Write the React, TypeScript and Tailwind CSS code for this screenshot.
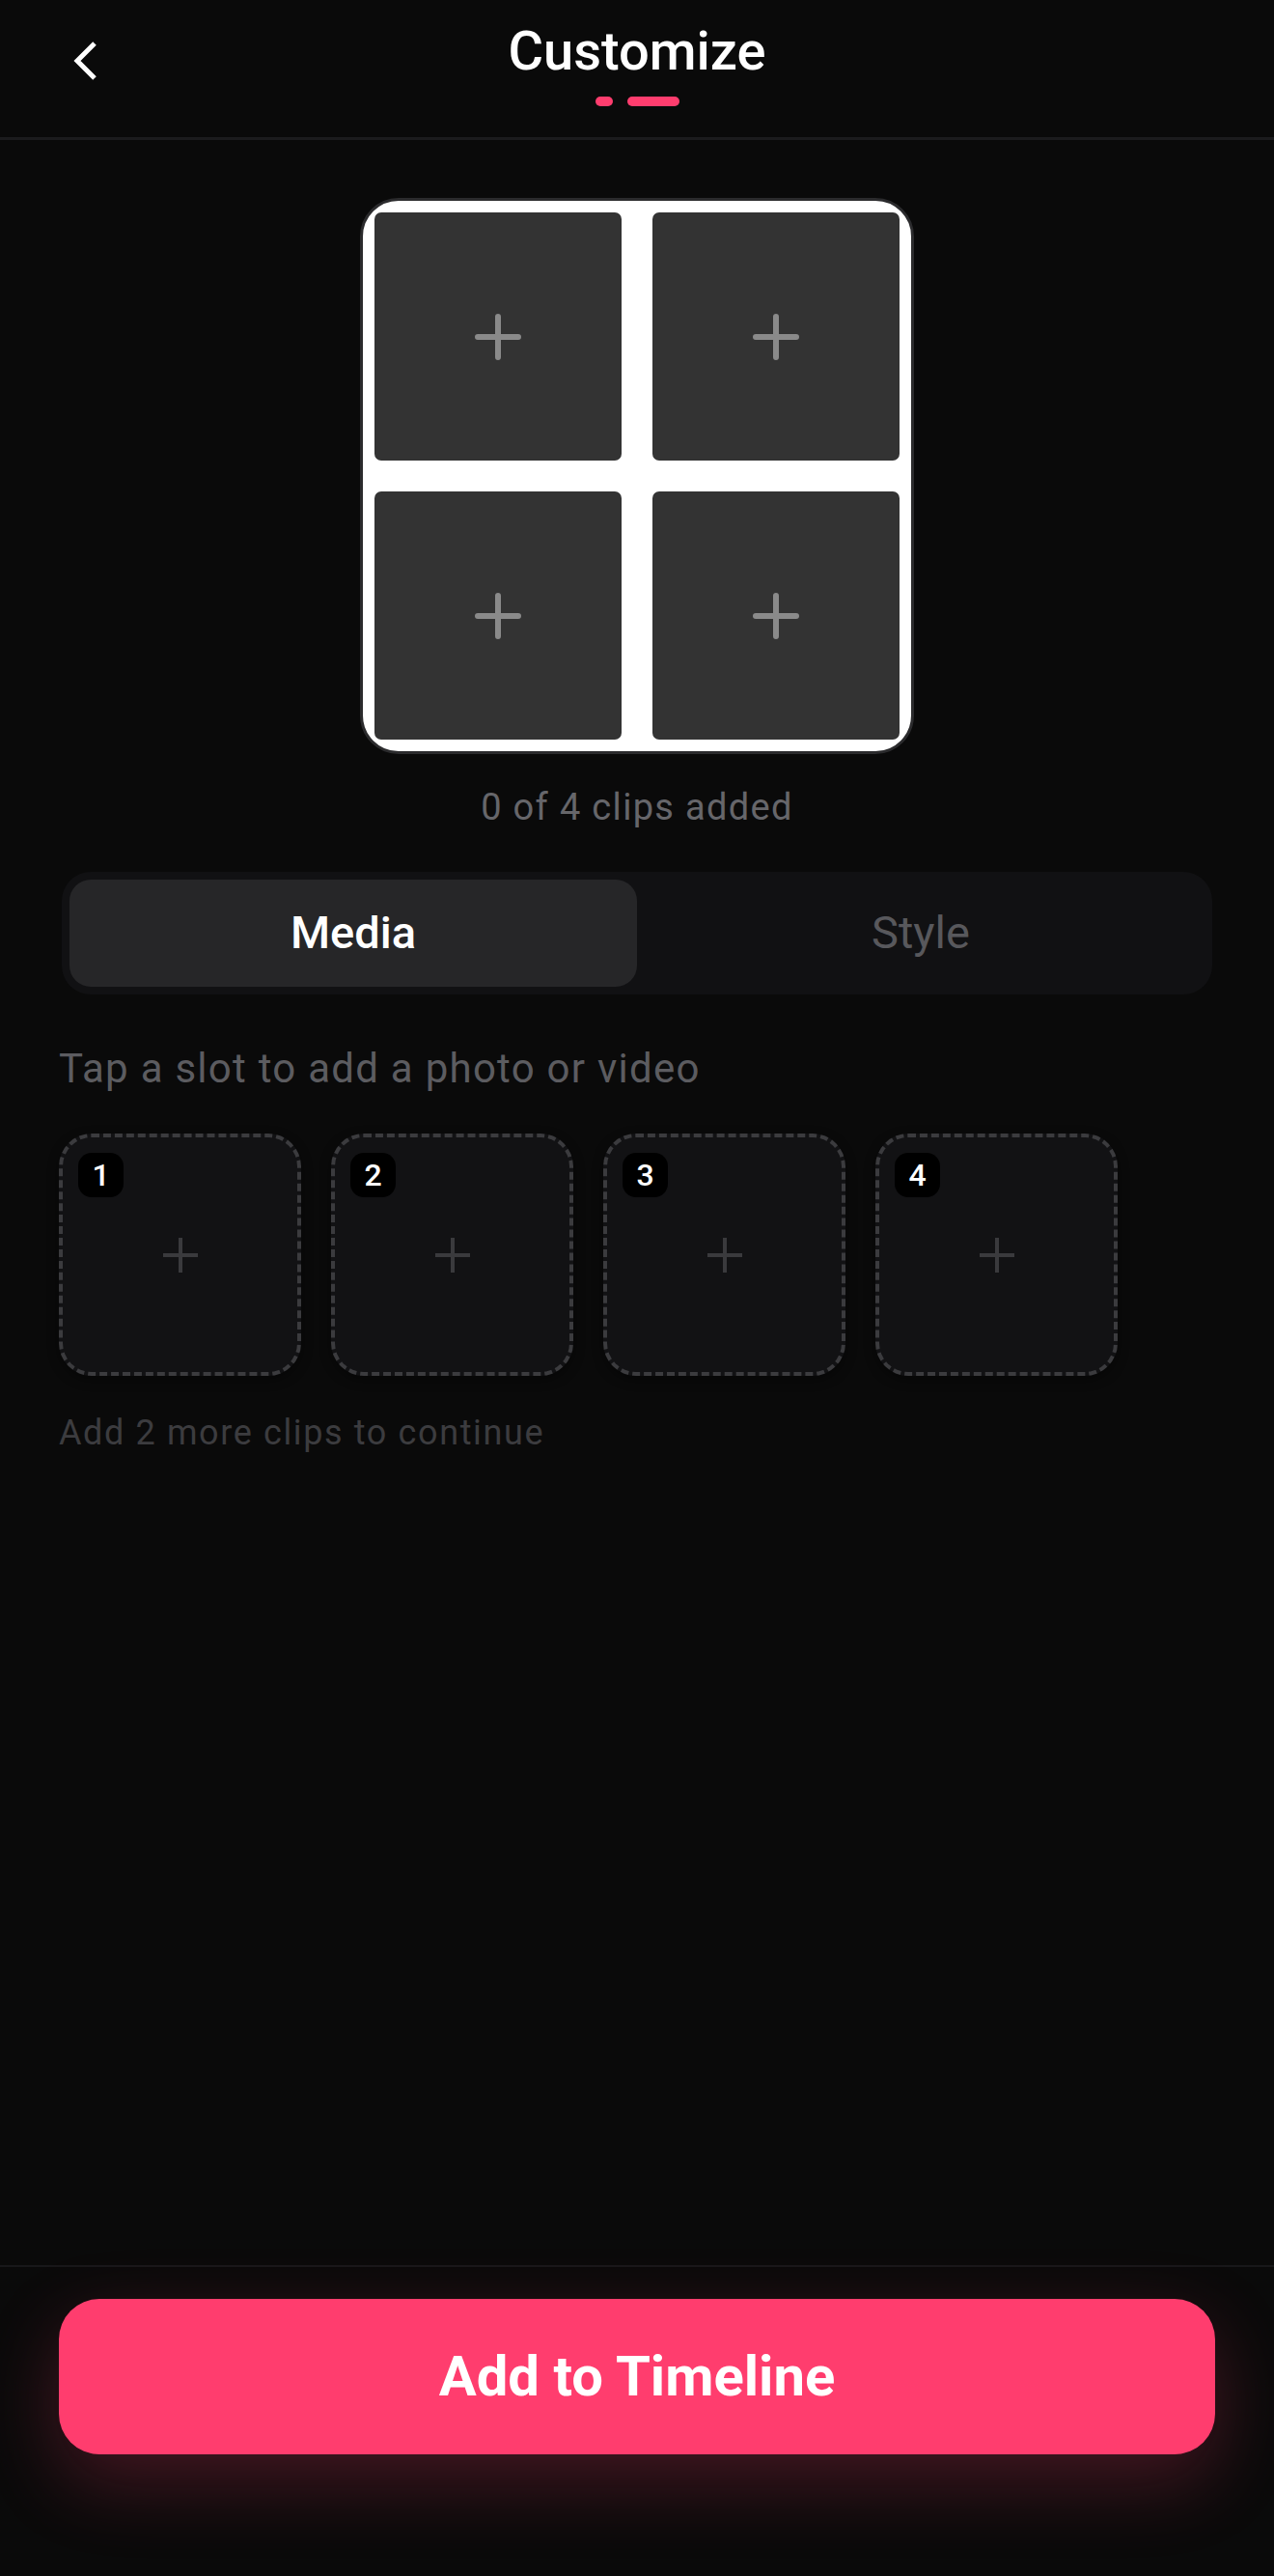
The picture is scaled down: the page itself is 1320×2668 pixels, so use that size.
import React from "react";

const SLOTS = [1, 2, 3, 4];

function PlusIcon({ size, stroke, color, round }: { size: number; stroke: number; color: string; round?: boolean }) {
  return (
    <svg width={size} height={size} viewBox={`0 0 ${size} ${size}`} fill="none">
      <path
        d={`M${size / 2} ${stroke / 2}V${size - stroke / 2}M${stroke / 2} ${size / 2}H${size - stroke / 2}`}
        stroke={color}
        strokeWidth={stroke}
        strokeLinecap={round ? "round" : "butt"}
      />
    </svg>
  );
}

function Header() {
  return (
    <header className="relative h-[145px] border-b-[3px] border-[#1b1b1d]">
      <button type="button" className="absolute left-[72px] top-[43px] p-0" aria-label="Back">
        <svg width="32" height="40" viewBox="0 0 32 40" fill="none">
          <path d="M26 2 L8 20 L26 38" stroke="#ffffff" strokeWidth="5" strokeLinejoin="miter" />
        </svg>
      </button>
      <div className="flex flex-col items-center pt-[25px]">
        <h1 className="text-[56px] font-medium leading-none text-white">Customize</h1>
        <div className="mt-[19px] flex items-center gap-[15px]">
          <span className="h-[10px] w-[18px] rounded-full bg-[#ff3d6e]" />
          <span className="h-[10px] w-[54px] rounded-full bg-[#ff3d6e]" />
        </div>
      </div>
    </header>
  );
}

function Preview() {
  return (
    <div className="flex flex-col items-center">
      <div className="mt-[60px] rounded-[40px] border-[3px] border-[#2b2b2d] bg-white p-[12px]">
        <div className="grid grid-cols-2 gap-[32px]">
          {SLOTS.map((n) => (
            <div key={n} className="flex h-[257px] w-[256px] items-center justify-center rounded-[7px] bg-[#333333]">
              <PlusIcon size={48} stroke={6} color="#8a8a8a" round />
            </div>
          ))}
        </div>
      </div>
      <p className="mt-[36px] text-[38px] leading-none tracking-[0.035em] text-[#66666a]">0 of 4 clips added</p>
    </div>
  );
}

function Tabs() {
  return (
    <div className="mx-[64px] mt-[48px] flex h-[127px] rounded-[30px] bg-[#111113] p-[8px]">
      <button type="button" className="flex flex-1 items-center justify-center rounded-[22px] bg-[#262628] text-[47px] font-medium text-white">
        Media
      </button>
      <button type="button" className="flex flex-1 items-center justify-center text-[47px] text-[#58585c]">
        Style
      </button>
    </div>
  );
}

function MediaSlots() {
  return (
    <section className="px-[61px]">
      <p className="mt-[56px] text-[42px] leading-none tracking-[0.03em] text-[#5c5c60]">Tap a slot to add a photo or video</p>
      <div className="mt-[46px] flex gap-[31px]">
        {SLOTS.map((n) => (
          <button
            key={n}
            type="button"
            className="relative flex h-[251px] w-[251px] items-center justify-center rounded-[34px] border-[4px] border-dashed border-[#3b3b3e] bg-[#121214] shadow-[0_4px_12px_rgba(0,0,0,0.4)]"
          >
            <span className="absolute left-[16px] top-[16px] flex h-[46px] w-[47px] items-center justify-center rounded-[14px] bg-black text-[32px] font-medium leading-none text-white">
              {n}
            </span>
            <PlusIcon size={40} stroke={4} color="#3a3a3d" />
          </button>
        ))}
      </div>
      <p className="mt-[41px] text-[36px] leading-none tracking-[0.045em] text-[#3c3c3f]">Add 2 more clips to continue</p>
    </section>
  );
}

export default function App() {
  return (
    <div className="flex min-h-[2668px] flex-col bg-[#0a0a0a] font-['Roboto',sans-serif]">
      <Header />
      <Preview />
      <Tabs />
      <MediaSlots />
      <div className="flex-1" />
      <footer className="border-t-[2px] border-[#18181a] px-[61px] pb-[126px] pt-[33px]">
        <button
          type="button"
          className="flex h-[161px] w-full items-center justify-center rounded-[42px] bg-[#ff3d6e] text-[58px] font-bold text-white shadow-[0_28px_80px_rgba(255,61,110,0.24)]"
        >
          Add to Timeline
        </button>
      </footer>
    </div>
  );
}
